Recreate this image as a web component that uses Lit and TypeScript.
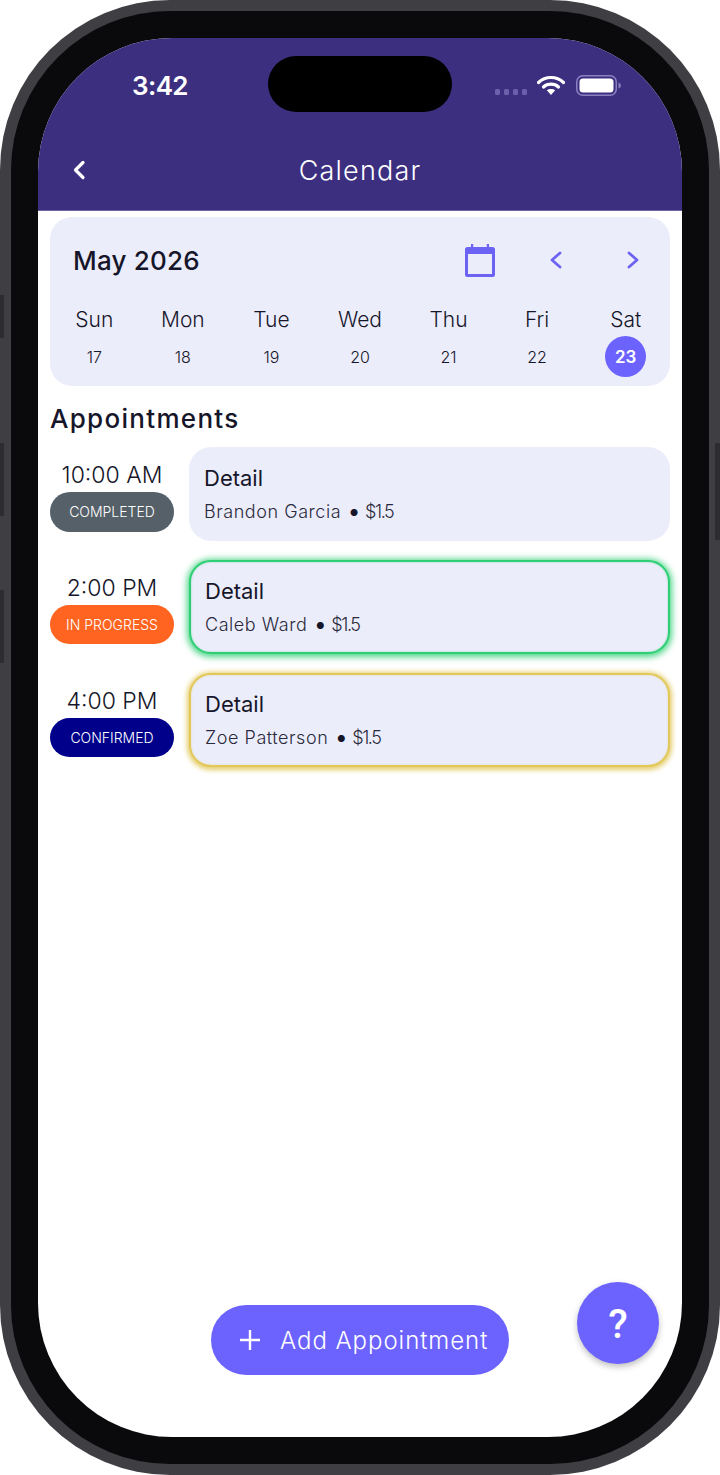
import { LitElement, html, css, svg } from "lit";
import { customElement } from "lit/decorators.js";

interface Appt { time: string; status: string; cls: string; name: string; glow: string; }

const DAYS = [["Sun", "17"], ["Mon", "18"], ["Tue", "19"], ["Wed", "20"], ["Thu", "21"], ["Fri", "22"], ["Sat", "23"]];
const APPTS: Appt[] = [
  { time: "10:00 AM", status: "COMPLETED", cls: "grey", name: "Brandon Garcia", glow: "" },
  { time: "2:00 PM", status: "IN PROGRESS", cls: "orange", name: "Caleb Ward", glow: "green" },
  { time: "4:00 PM", status: "CONFIRMED", cls: "navy", name: "Zoe Patterson", glow: "yellow" },
];

const chevron = (d: string) => svg`<svg class="chev" width="14" height="18" viewBox="0 0 14 18" fill="none"><path d="${d}" stroke="#6c63f0" stroke-width="2.8" stroke-linecap="round" stroke-linejoin="round"/></svg>`;

@customElement("app-root")
export class AppRoot extends LitElement {
  static styles = css`
    :host { display: block; width: 720px; height: 1475px; background: #fff; font-family: Inter, "Liberation Sans", sans-serif; color: #16162a; }
    * { box-sizing: border-box; }
    .phone { position: relative; width: 720px; height: 1475px; background: #3f3e43; border-radius: 170px; padding: 11px; }
    .side { position: absolute; width: 4px; background: #2d2d31; }
    .s1 { left: 0; top: 295px; height: 43px; }
    .s2 { left: 0; top: 443px; height: 73px; }
    .s3 { left: 0; top: 590px; height: 73px; }
    .s4 { right: 0; top: 443px; height: 97px; width: 5px; }
    .bezel { height: 100%; background: #0a0a0c; border-radius: 159px; padding: 27px; }
    .screen { position: relative; height: 100%; background: #fff; border-radius: 134px; overflow: hidden; display: flex; flex-direction: column; }
    .head { height: 173px; flex: none; background: #3c2f80; border-bottom: 1px solid #6e64a3; color: #fff; display: flex; flex-direction: column; }
    .island { position: absolute; left: 230px; top: 18px; width: 184px; height: 56px; border-radius: 28px; background: #000; }
    .status { height: 60px; margin-top: 17px; padding: 0 60px 0 94px; display: flex; align-items: center; justify-content: space-between; }
    .clock { font-size: 26px; font-weight: 600; letter-spacing: -.6px; }
    .sys { display: flex; align-items: center; }
    .dots { display: flex; gap: 3.5px; margin: 14px 10px 0 0; }
    .dots i { width: 5.5px; height: 6px; border-radius: 1.5px; background: #6a60ab; }
    .bar { height: 64px; margin-top: 23px; padding: 0 0 0 34px; display: flex; align-items: center; position: relative; }
    .title { position: absolute; left: 0; right: 0; text-align: center; font-size: 27px; font-weight: 300; letter-spacing: 1.2px; }
    .body { flex: 1; padding: 6px 12px 0; }
    .cal { height: 169px; background: #ecedfb; border-radius: 22px; padding-top: 21px; }
    .calhead { height: 44px; display: flex; align-items: center; padding: 0 30.5px 0 23px; }
    .month { flex: 1; font-size: 26px; font-weight: 500; letter-spacing: .2px; }
    .calicon { margin-right: 54px; }
    .chevgap { margin-right: 62.5px; display: flex; }
    .week { display: grid; grid-template-columns: repeat(7, 1fr); margin-top: 23px; text-align: center; }
    .dow { font-size: 21px; font-weight: 300; line-height: 30px; }
    .date { width: 41px; height: 41px; margin: 1px auto 0; border-radius: 50%; display: flex; align-items: center; justify-content: center; font-size: 16px; font-weight: 300; }
    .date.on { background: #6c63ff; color: #fff; font-weight: 600; font-size: 17px; }
    h2 { margin: 13px 0 8.2px; font-size: 26px; line-height: 40px; font-weight: 500; letter-spacing: 1.3px; }
    .rows { display: flex; flex-direction: column; gap: 18.7px; }
    .row { height: 94px; display: flex; gap: 15px; }
    .when { width: 124px; flex: none; padding-top: 12px; text-align: center; }
    .time { font-size: 23px; font-weight: 300; line-height: 32px; margin-bottom: 1px; }
    .pill { height: 39.5px; border-radius: 20px; color: #fff; font-size: 14px; font-weight: 300; display: flex; align-items: center; justify-content: center; }
    .grey { background: #566069; } .orange { background: #ff6421; } .navy { background: #00008b; }
    .card { flex: 1; background: #ecedfb; border-radius: 22px; padding: 16px 15px 0; }
    .card.green, .card.yellow { border: 2px solid; padding: 14.5px 14px 0; }
    .card.green { border-color: #2ecf74; box-shadow: 0 1px 6px 2px rgba(46,207,116,.85), inset 0 0 2px rgba(46,207,116,.5); }
    .card.yellow { border-color: #e2c85a; box-shadow: 0 1px 5px 2px rgba(226,200,90,.9), inset 0 0 2px rgba(226,200,90,.5); }
    .detail { font-size: 22px; line-height: 30px; font-weight: 400; margin-bottom: 4px; }
    .sub { font-size: 18px; line-height: 30px; font-weight: 300; color: #2a2a3c; letter-spacing: .55px; }
    .bullet { font-size: 26px; line-height: 0; vertical-align: -2px; color: #16162a; letter-spacing: 0; }
    .price { margin-left: -2px; letter-spacing: -1.4px; }
    .add { position: absolute; left: 173px; top: 1267px; width: 298px; height: 70px; border-radius: 35px; background: #6c63ff; color: #fff; display: flex; align-items: center; padding-left: 28px; gap: 19px; font-size: 24px; font-weight: 300; letter-spacing: .95px; }
    .fab { position: absolute; left: 539px; top: 1244px; width: 82px; height: 82px; padding-top: 2px; border-radius: 50%; background: #6c63ff; color: #fff; display: flex; align-items: center; justify-content: center; font-size: 40px; font-weight: 500; box-shadow: 0 3px 6px rgba(0,0,0,.25); font-family: Roboto, sans-serif; }
  `;

  render() {
    return html`<div class="phone">
      <i class="side s1"></i><i class="side s2"></i><i class="side s3"></i><i class="side s4"></i>
      <div class="bezel"><div class="screen">
        <div class="head">
          <div class="status">
            <span class="clock">3:42</span>
            <div class="sys">
              <div class="dots"><i></i><i></i><i></i><i></i></div>
              <svg width="28" height="20" viewBox="0 0 28 20" style="margin-right:11px">
                <path d="M1.5 7.5C8.5 .8 19.5 .8 26.5 7.5" fill="none" stroke="#fff" stroke-width="3.200" stroke-linecap="round"/>
                <path d="M6.500 12C10.500 8.200 17.500 8.200 21.500 12" fill="none" stroke="#fff" stroke-width="3.200" stroke-linecap="round"/>
                <path d="M9.800 15.300C12 13.400 16 13.400 18.200 15.300L14 20Z" fill="#fff"/>
              </svg>
              <svg width="46" height="21" viewBox="0 0 46 21">
                <rect x=".75" y=".75" width="39.5" height="19.5" rx="6" fill="none" stroke="#8a82c0" stroke-width="1.5"/>
                <rect x="3.5" y="3.5" width="34" height="14" rx="3.5" fill="#fff"/>
                <path d="M42.5 7.5C44 8 44.8 9 44.8 10.5S44 13 42.5 13.5Z" fill="#8a82c0"/>
              </svg>
            </div>
          </div>
          <div class="bar">
            <span class="title">Calendar</span>
            <svg width="14" height="20" viewBox="0 0 14 20" fill="none"><path d="M11 2.500L3.500 10L11 17.500" stroke="#fff" stroke-width="3.200" stroke-linecap="round" stroke-linejoin="round"/></svg>
          </div>
        </div>
        <div class="island"></div>
        <div class="body">
          <div class="cal">
            <div class="calhead">
              <span class="month">May 2026</span>
              <svg class="calicon" width="30" height="33" viewBox="0 0 30 33">
                <path d="M6 0h2.200v3h13.600V0H24v3h3.500A2.500 2.500 0 0 1 30 5.500v25a2.500 2.500 0 0 1-2.500 2.500h-25A2.500 2.500 0 0 1 0 30.500v-25A2.500 2.500 0 0 1 2.500 3H6Z" fill="#6c63f5"/>
                <rect x="3" y="10" width="24" height="20" fill="#ecedfb"/>
              </svg>
              <span class="chevgap">${chevron("M11 2L3 9L11 16")}</span>
              ${chevron("M3 2L11 9L3 16")}
            </div>
            <div class="week">
              ${DAYS.map(([d, n]) => html`<div><div class="dow">${d}</div><div class="date ${n === "23" ? "on" : ""}">${n}</div></div>`)}
            </div>
          </div>
          <h2>Appointments</h2>
          <div class="rows">
            ${APPTS.map(a => html`<div class="row">
              <div class="when"><div class="time">${a.time}</div><div class="pill ${a.cls}">${a.status}</div></div>
              <div class="card ${a.glow}"><div class="detail">Detail</div><div class="sub">${a.name} <span class="bullet">•</span> <span class="price">$1.5</span></div></div>
            </div>`)}
          </div>
        </div>
        <div class="add">
          <svg width="22" height="22" viewBox="0 0 22 22"><path d="M11 1v20M1 11h20" stroke="#fff" stroke-width="2.400"/></svg>
          <span>Add Appointment</span>
        </div>
        <div class="fab">?</div>
      </div></div>
    </div>`;
  }
}
